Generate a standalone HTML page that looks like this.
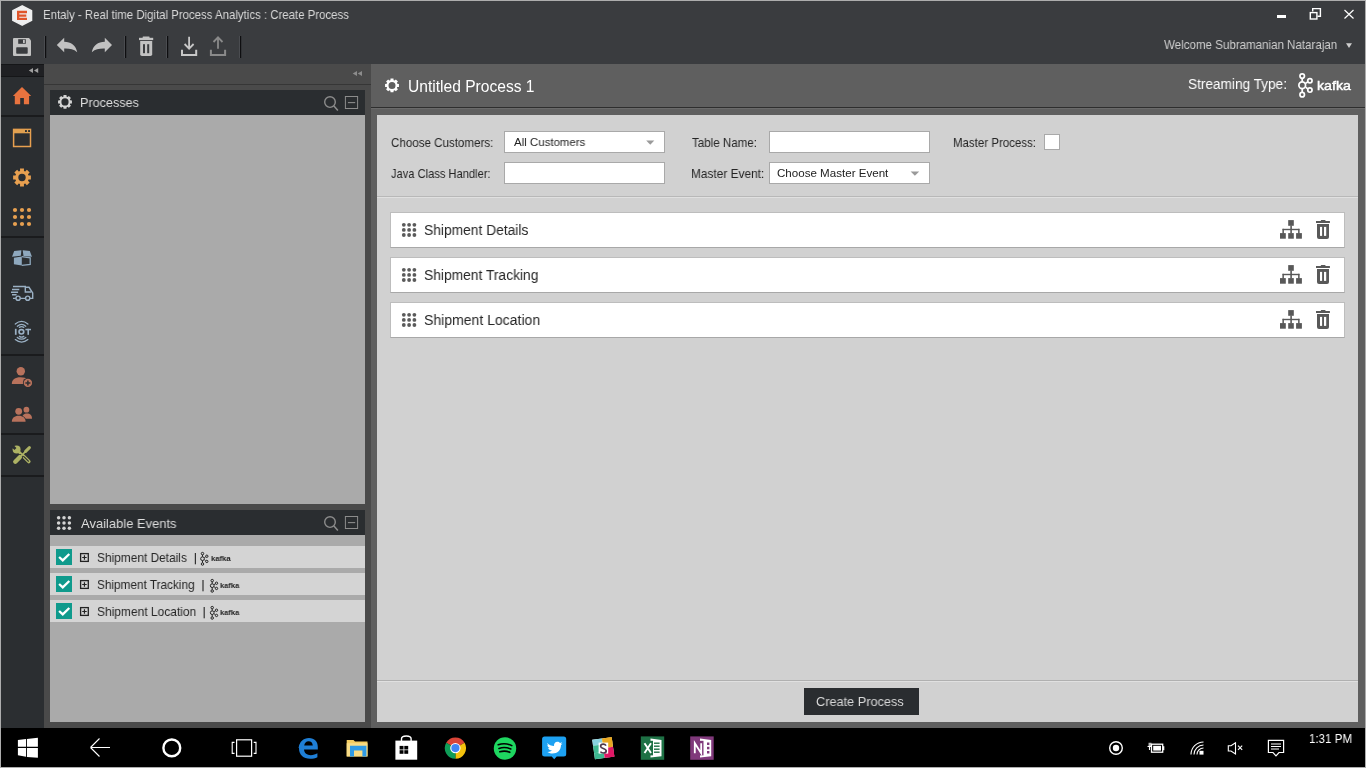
<!DOCTYPE html>
<html><head><meta charset="utf-8">
<style>
*{box-sizing:border-box;margin:0;padding:0}
html,body{width:1366px;height:768px;overflow:hidden;background:#000;font-family:"Liberation Sans",sans-serif}
.a{position:absolute}
.t{position:absolute;white-space:nowrap;line-height:1;transform-origin:0 0;will-change:transform}
svg.full{position:absolute;left:0;top:0;width:1366px;height:768px;overflow:visible}
</style></head><body>
<!-- title bar + toolbar -->
<div class="a" style="left:0;top:0;width:1366px;height:64px;background:#3a3c3f"></div>
<!-- sidebar -->
<div class="a" style="left:0;top:64px;width:44px;height:664px;background:#2b2e31"></div>
<div class="a" style="left:0;top:64px;width:44px;height:13px;background:#1f2023;border-top:1px solid #151618;border-bottom:1px solid #151618"></div>
<div class="a" style="left:0;top:115px;width:44px;height:2px;background:#1a1b1d"></div>
<div class="a" style="left:0;top:236px;width:44px;height:2px;background:#1a1b1d"></div>
<div class="a" style="left:0;top:354px;width:44px;height:2px;background:#1a1b1d"></div>
<div class="a" style="left:0;top:433px;width:44px;height:2px;background:#1a1b1d"></div>
<div class="a" style="left:0;top:475px;width:44px;height:2px;background:#1a1b1d"></div>
<!-- left panel -->
<div class="a" style="left:44px;top:64px;width:327px;height:664px;background:#4a4a4a"></div>
<div class="a" style="left:44px;top:64px;width:327px;height:20px;background:#4a4a4a"></div>
<div class="a" style="left:44px;top:84px;width:327px;height:1px;background:#363636"></div>
<div class="a" style="left:50px;top:90px;width:315px;height:25px;background:#2a2d30"></div>
<div class="a" style="left:50px;top:115px;width:315px;height:389px;background:#aaaaaa"></div>
<div class="a" style="left:50px;top:510px;width:315px;height:25px;background:#2a2d30"></div>
<div class="a" style="left:50px;top:535px;width:315px;height:187px;background:#aaaaaa"></div>
<div class="a" style="left:50px;top:546px;width:315px;height:22px;background:#d4d4d4"></div>
<div class="a" style="left:50px;top:573px;width:315px;height:22px;background:#d4d4d4"></div>
<div class="a" style="left:50px;top:600px;width:315px;height:22px;background:#d4d4d4"></div>
<!-- main -->
<div class="a" style="left:371px;top:64px;width:995px;height:664px;background:#5f5f5f"></div>
<div class="a" style="left:371px;top:107px;width:995px;height:1px;background:#2e2e2e"></div>
<div class="a" style="left:371px;top:108px;width:995px;height:1px;background:#6a6a6a"></div>
<div class="a" style="left:377px;top:115px;width:981px;height:607px;background:#d1d1d1"></div>
<div class="a" style="left:377px;top:196px;width:981px;height:1px;background:#b8b8b8"></div>
<div class="a" style="left:377px;top:197px;width:981px;height:1px;background:#e0e0e0"></div>
<div class="a" style="left:377px;top:680px;width:981px;height:1px;background:#b0b0b0"></div>
<div class="a" style="left:377px;top:681px;width:981px;height:1px;background:#e0e0e0"></div>
<!-- form controls -->
<div class="a" style="left:504px;top:131px;width:161px;height:22px;background:#fff;border:1px solid #a9a9a9"></div>
<div class="a" style="left:504px;top:162px;width:161px;height:22px;background:#fff;border:1px solid #a9a9a9"></div>
<div class="a" style="left:769px;top:131px;width:161px;height:22px;background:#fff;border:1px solid #a9a9a9"></div>
<div class="a" style="left:769px;top:162px;width:161px;height:22px;background:#fff;border:1px solid #a9a9a9"></div>
<div class="a" style="left:1044px;top:134px;width:16px;height:16px;background:#fff;border:1px solid #a9a9a9"></div>
<!-- rows -->
<div class="a" style="left:390px;top:212px;width:955px;height:36px;background:#fff;border:1px solid #bdbdbd;border-bottom-color:#a8a8a8"></div>
<div class="a" style="left:390px;top:257px;width:955px;height:36px;background:#fff;border:1px solid #bdbdbd;border-bottom-color:#a8a8a8"></div>
<div class="a" style="left:390px;top:302px;width:955px;height:36px;background:#fff;border:1px solid #bdbdbd;border-bottom-color:#a8a8a8"></div>
<!-- button -->
<div class="a" style="left:804px;top:688px;width:115px;height:27px;background:#2a2d30"></div>
<!-- taskbar -->
<div class="a" style="left:0;top:728px;width:1366px;height:40px;background:#000"></div>
<svg class="full" viewBox="0 0 1366 768">
<path d="M22.2,5.9 L31.5,10.6 L31.5,20.4 L22.2,25.1 L12.899999999999999,20.4 L12.899999999999999,10.6Z" fill="#efefef" stroke="#efefef" stroke-width="1.6" stroke-linejoin="round"/>
<path d="M17,10.8 H27 V13.2 H19.3 V14.5 H26.3 V16.7 H19.3 V17.8 H27 V20.1 H17Z" fill="#e0552a"/>
<rect x="1277" y="15" width="9" height="3" fill="#fff"/>
<path d="M1312.7,11.5 V8.6 H1320.4 V16.2 H1317.5" fill="none" stroke="#fff" stroke-width="1.4"/>
<rect x="1310.3" y="12.6" width="6.6" height="6.4" fill="none" stroke="#fff" stroke-width="1.4"/>
<path d="M1344.5,10 L1353.5,18.5 M1353.5,10 L1344.5,18.5" stroke="#fff" stroke-width="1.2"/>
<path d="M13,39 Q13,38 14,38 H29 L31,40.5 V55 Q31,56 30,56 H14 Q13,56 13,55Z" fill="#c2c2c2"/>
<rect x="18.2" y="39.2" width="7.6" height="4.6" fill="#3a3c3f"/>
<rect x="23" y="39.8" width="1.8" height="3.3" fill="#c2c2c2"/>
<rect x="16.2" y="47.2" width="11.5" height="6.5" rx="0.8" fill="#3a3c3f"/>
<rect x="44.0" y="36" width="1" height="22" fill="#4a4c50"/>
<rect x="45.0" y="36" width="1.2" height="22" fill="#0e0e10"/>
<rect x="124.0" y="36" width="1" height="22" fill="#4a4c50"/>
<rect x="125.0" y="36" width="1.2" height="22" fill="#0e0e10"/>
<rect x="166.0" y="36" width="1" height="22" fill="#4a4c50"/>
<rect x="167.0" y="36" width="1.2" height="22" fill="#0e0e10"/>
<rect x="239.0" y="36" width="1" height="22" fill="#4a4c50"/>
<rect x="240.0" y="36" width="1.2" height="22" fill="#0e0e10"/>
<path d="M56.8,45 L64.2,37.7 V41.7 C71,41.7 76,45.5 77.2,52.2 C73.5,48.8 69.5,48.4 64.2,48.5 V52.2Z" fill="#c2c2c2"/>
<path d="M112,45 L104.8,37.7 V41.7 C98,41.7 93,45.5 91.8,52.2 C95.5,48.8 99.5,48.4 104.8,48.5 V52.2Z" fill="#c2c2c2"/>
<rect x="139" y="37.8" width="14.2" height="2.3" fill="#c2c2c2"/>
<rect x="142.6" y="36.6" width="7" height="1.6" rx="0.6" fill="#c2c2c2"/>
<path d="M140.2,41 H152.2 V54.2 Q152.2,56 150.4,56 H142 Q140.2,56 140.2,54.2Z" fill="#c2c2c2"/>
<rect x="143" y="44.2" width="2" height="9" fill="#3a3c3f"/><rect x="147.2" y="44.2" width="2" height="9" fill="#3a3c3f"/>
<path d="M182,49.8 V55 H196.2 V49.8" fill="none" stroke="#c8c8c8" stroke-width="2"/>
<path d="M189.1,36.8 V48 M184.6,44 L189.1,48.6 L193.6,44" fill="none" stroke="#c8c8c8" stroke-width="1.8"/>
<path d="M210.9,49.8 V55 H225.1 V49.8" fill="none" stroke="#8a8a8a" stroke-width="2"/>
<path d="M218,48.7 V37.5 M213.5,42 L218,37.4 L222.5,42" fill="none" stroke="#8a8a8a" stroke-width="1.8"/>
<path d="M1346,43.3 H1352 L1349,48Z" fill="#cfcfcf"/>
<path d="M28.8,70.5 L33,67.9 V73.1Z M34,70.5 L38.2,67.9 V73.1Z" fill="#a0a0a0"/>
<path d="M352.7,73.5 L357,71.1 V76Z M357.7,73.5 L362,71.1 V76Z" fill="#8c8c8c"/>
<path d="M22,87.1 L31.2,96 H29.1 V104.2 H23.9 V98.1 H20.2 V104.2 H14.8 V96 H12.9Z" fill="#e8733f"/>
<rect x="13.6" y="129.4" width="16.9" height="17.1" fill="none" stroke="#e8a050" stroke-width="1.5"/>
<rect x="13.6" y="129.4" width="16.9" height="3.9" fill="#e0a050"/>
<rect x="25" y="130.1" width="1.9" height="1.9" fill="#2b2e31"/><rect x="28.1" y="130.1" width="1.9" height="1.9" fill="#2b2e31"/>
<path d="M20.07,170.98 L20.03,168.62 L23.97,168.62 L23.93,170.98 L25.24,171.52 L26.89,169.83 L29.67,172.61 L27.98,174.26 L28.52,175.57 L30.88,175.53 L30.88,179.47 L28.52,179.43 L27.98,180.74 L29.67,182.39 L26.89,185.17 L25.24,183.48 L23.93,184.02 L23.97,186.38 L20.03,186.38 L20.07,184.02 L18.76,183.48 L17.11,185.17 L14.33,182.39 L16.02,180.74 L15.48,179.43 L13.12,179.47 L13.12,175.53 L15.48,175.57 L16.02,174.26 L14.33,172.61 L17.11,169.83 L18.76,171.52ZM25.70,177.50 A3.7,3.7 0 1,0 18.30,177.50 A3.7,3.7 0 1,0 25.70,177.50Z" fill="#e8a050" fill-rule="evenodd"/>
<circle cx="15" cy="210" r="2.1" fill="#e8a050"/>
<circle cx="15" cy="217" r="2.1" fill="#e8a050"/>
<circle cx="15" cy="224" r="2.1" fill="#e8a050"/>
<circle cx="22" cy="210" r="2.1" fill="#e8a050"/>
<circle cx="22" cy="217" r="2.1" fill="#e8a050"/>
<circle cx="22" cy="224" r="2.1" fill="#e8a050"/>
<circle cx="29" cy="210" r="2.1" fill="#e8a050"/>
<circle cx="29" cy="217" r="2.1" fill="#e8a050"/>
<circle cx="29" cy="224" r="2.1" fill="#e8a050"/>
<path d="M12,256.8 L14.2,251 L21.4,250.3 L20.8,255.8Z" fill="#8ea8be"/>
<path d="M22.7,250.2 L29.8,251 L32,256.8 L23.5,256Z" fill="#8ea8be"/>
<path d="M13.9,257.8 L21.8,256.6 V265.4 L13.9,264.2Z" fill="#8ea8be"/>
<path d="M21.8,256.6 L30.2,257.8 V264.4 L21.8,265.4" fill="none" stroke="#8ea8be" stroke-width="1.3"/>
<g fill="none" stroke="#9ab0c4" stroke-width="1.4"><path d="M13,286.5 H25.3 V292 H31"/><path d="M25.3,287.3 H29 L32.7,293 V298.4 H29.9 M25.5,298.4 H20.3 M15.9,298.4 H13"/><path d="M12,289.5 H19.3 M11,292.2 H18.1 M12,294.8 H16.6"/><circle cx="18.1" cy="298.2" r="2.1"/><circle cx="27.7" cy="298.2" r="2.1"/></g>
<g fill="none" stroke="#9ab0c4" stroke-width="1.3" stroke-linecap="round"><path d="M15.3,324 Q21.6,318.8 27.9,324"/><path d="M17.3,326.2 Q21.6,322.6 25.8,326.2"/><path d="M19.4,327.4 Q21.6,325.8 23.8,327.4"/><path d="M15.3,339.6 Q21.6,344.8 27.9,339.6"/><path d="M17.3,337.4 Q21.6,341 25.8,337.4"/><path d="M19.4,336.4 Q21.6,338 23.8,336.4"/></g>
<g fill="#9ab0c4"><rect x="14.9" y="328.8" width="1.7" height="6"/><rect x="25.4" y="328.8" width="5.6" height="1.5"/><rect x="27.4" y="328.8" width="1.6" height="6"/></g>
<ellipse cx="21.4" cy="331.8" rx="2.35" ry="2.2" fill="none" stroke="#9ab0c4" stroke-width="1.7"/>
<circle cx="20.8" cy="371.3" r="4.2" fill="#b8725c"/>
<path d="M11.8,384 C11.8,379.5 15,377.2 20.5,377.2 C24,377.2 26,378 27,379 V384Z" fill="#b8725c"/>
<circle cx="27.9" cy="382.9" r="5" fill="#2b2e31"/><circle cx="27.9" cy="382.9" r="4.2" fill="#b8725c"/>
<path d="M25.4,382.9 H30.4 M27.9,380.4 V385.4" stroke="#2b2e31" stroke-width="1.5"/>
<circle cx="26.4" cy="409.7" r="2.9" fill="#b8725c"/>
<path d="M22,418.8 C22,415 24,413.5 27,413.5 C30,413.5 32,415 32,418.8Z" fill="#b8725c"/>
<circle cx="18.7" cy="411.3" r="4" fill="#2b2e31"/><circle cx="18.7" cy="411.3" r="3.4" fill="#b8725c"/>
<path d="M11,422 C11,417.5 14,415.2 18.7,415.2 C23.4,415.2 26.4,417.5 26.4,422Z" fill="#2b2e31"/>
<path d="M11.8,421.8 C11.8,418 14.5,415.8 18.7,415.8 C22.9,415.8 25.6,418 25.6,421.8Z" fill="#b8725c"/>
<g stroke-linecap="round"><line x1="23.2" y1="456" x2="28.8" y2="461.6" stroke="#adb264" stroke-width="3.6"/><line x1="23.6" y1="456.4" x2="28.4" y2="461.2" stroke="#2b2e31" stroke-width="1.2"/><circle cx="16.6" cy="449.6" r="4" fill="#adb264"/><line x1="17" y1="450" x2="22.4" y2="455.2" stroke="#adb264" stroke-width="2.6"/><rect x="11.5" y="446" width="4.6" height="2.8" fill="#2b2e31" transform="rotate(45 13.8 447.4)"/><line x1="15.5" y1="461.5" x2="19.8" y2="457.2" stroke="#2b2e31" stroke-width="6"/><line x1="15.3" y1="461.7" x2="19.8" y2="457.2" stroke="#adb264" stroke-width="4.4"/><line x1="19.8" y1="457.2" x2="26.4" y2="450.6" stroke="#adb264" stroke-width="1.6"/><line x1="25.6" y1="451.4" x2="29.4" y2="447.6" stroke="#adb264" stroke-width="3"/></g>
<path d="M390.39,80.14 L390.52,78.46 L393.48,78.46 L393.61,80.14 L394.58,80.54 L395.87,79.45 L397.95,81.53 L396.86,82.82 L397.26,83.79 L398.94,83.92 L398.94,86.88 L397.26,87.01 L396.86,87.98 L397.95,89.27 L395.87,91.35 L394.58,90.26 L393.61,90.66 L393.48,92.34 L390.52,92.34 L390.39,90.66 L389.42,90.26 L388.13,91.35 L386.05,89.27 L387.14,87.98 L386.74,87.01 L385.06,86.88 L385.06,83.92 L386.74,83.79 L387.14,82.82 L386.05,81.53 L388.13,79.45 L389.42,80.54ZM395.50,85.40 A3.5,3.5 0 1,0 388.50,85.40 A3.5,3.5 0 1,0 395.50,85.40Z" fill="#ffffff" fill-rule="evenodd"/>
<path d="M63.39,96.64 L63.52,94.96 L66.48,94.96 L66.61,96.64 L67.58,97.04 L68.87,95.95 L70.95,98.03 L69.86,99.32 L70.26,100.29 L71.94,100.42 L71.94,103.38 L70.26,103.51 L69.86,104.48 L70.95,105.77 L68.87,107.85 L67.58,106.76 L66.61,107.16 L66.48,108.84 L63.52,108.84 L63.39,107.16 L62.42,106.76 L61.13,107.85 L59.05,105.77 L60.14,104.48 L59.74,103.51 L58.06,103.38 L58.06,100.42 L59.74,100.29 L60.14,99.32 L59.05,98.03 L61.13,95.95 L62.42,97.04ZM68.60,101.90 A3.6,3.6 0 1,0 61.40,101.90 A3.6,3.6 0 1,0 68.60,101.90Z" fill="#d4d4d4" fill-rule="evenodd"/>
<g fill="none" stroke="#ffffff" stroke-width="1.7"><path d="M1302.2,78.30000000000001 V81.7 M1302.2,88.7 V92.5 M1305.6000000000001,83.3 L1307.7,82.0 M1305.6000000000001,87.10000000000001 L1307.7,88.8"/><circle cx="1302.20" cy="76.10" r="2.25"/><circle cx="1302.20" cy="85.20" r="3.35"/><circle cx="1302.20" cy="94.70" r="2.25"/><circle cx="1309.90" cy="80.80" r="2.15"/><circle cx="1309.90" cy="90.10" r="2.15"/></g>
<circle cx="330" cy="102.1" r="5.3" fill="none" stroke="#8c8c8c" stroke-width="1.4"/>
<line x1="333.9" y1="106" x2="337.9" y2="110.6" stroke="#8c8c8c" stroke-width="1.5"/>
<rect x="345.4" y="96.5" width="12.2" height="12" fill="none" stroke="#8c8c8c" stroke-width="1"/>
<line x1="347.9" y1="102.6" x2="355.2" y2="102.6" stroke="#8c8c8c" stroke-width="1.1"/>
<circle cx="330" cy="522.1" r="5.3" fill="none" stroke="#8c8c8c" stroke-width="1.4"/>
<line x1="333.9" y1="526" x2="337.9" y2="530.6" stroke="#8c8c8c" stroke-width="1.5"/>
<rect x="345.4" y="516.5" width="12.2" height="12" fill="none" stroke="#8c8c8c" stroke-width="1"/>
<line x1="347.9" y1="522.6" x2="355.2" y2="522.6" stroke="#8c8c8c" stroke-width="1.1"/>
<circle cx="58.6" cy="517.8" r="1.75" fill="#d4d4d4"/>
<circle cx="58.6" cy="523" r="1.75" fill="#d4d4d4"/>
<circle cx="58.6" cy="528.2" r="1.75" fill="#d4d4d4"/>
<circle cx="64" cy="517.8" r="1.75" fill="#d4d4d4"/>
<circle cx="64" cy="523" r="1.75" fill="#d4d4d4"/>
<circle cx="64" cy="528.2" r="1.75" fill="#d4d4d4"/>
<circle cx="69.4" cy="517.8" r="1.75" fill="#d4d4d4"/>
<circle cx="69.4" cy="523" r="1.75" fill="#d4d4d4"/>
<circle cx="69.4" cy="528.2" r="1.75" fill="#d4d4d4"/>
<circle cx="403.8" cy="224.8" r="1.9" fill="#5a5a5a"/>
<circle cx="403.8" cy="229.9" r="1.9" fill="#5a5a5a"/>
<circle cx="403.8" cy="235.0" r="1.9" fill="#5a5a5a"/>
<circle cx="409.1" cy="224.8" r="1.9" fill="#5a5a5a"/>
<circle cx="409.1" cy="229.9" r="1.9" fill="#5a5a5a"/>
<circle cx="409.1" cy="235.0" r="1.9" fill="#5a5a5a"/>
<circle cx="414.4" cy="224.8" r="1.9" fill="#5a5a5a"/>
<circle cx="414.4" cy="229.9" r="1.9" fill="#5a5a5a"/>
<circle cx="414.4" cy="235.0" r="1.9" fill="#5a5a5a"/>
<g fill="#585858"><rect x="1288.2" y="220.1" width="5.6" height="5.7"/><rect x="1290.3" y="225.5" width="1.6" height="8"/><rect x="1282.6" y="228.8" width="16.8" height="1.4"/><rect x="1282.4" y="228.8" width="1.5" height="5"/><rect x="1298.1" y="228.8" width="1.5" height="5"/><rect x="1280" y="233.1" width="5.8" height="5.6"/><rect x="1288.2" y="233.1" width="5.6" height="5.6"/><rect x="1296.1" y="233.1" width="5.8" height="5.6"/><rect x="1316" y="221" width="13.9" height="2"/><rect x="1320.8" y="220" width="4.7" height="1.5" rx="0.5"/><path d="M1317,224 H1329 V236.9 Q1329,238.9 1327,238.9 H1319 Q1317,238.9 1317,236.9Z"/></g>
<rect x="1320" y="226.9" width="2.1" height="9" fill="#fff"/><rect x="1324" y="226.9" width="2.2" height="9" fill="#fff"/>
<circle cx="403.8" cy="269.8" r="1.9" fill="#5a5a5a"/>
<circle cx="403.8" cy="274.9" r="1.9" fill="#5a5a5a"/>
<circle cx="403.8" cy="280.0" r="1.9" fill="#5a5a5a"/>
<circle cx="409.1" cy="269.8" r="1.9" fill="#5a5a5a"/>
<circle cx="409.1" cy="274.9" r="1.9" fill="#5a5a5a"/>
<circle cx="409.1" cy="280.0" r="1.9" fill="#5a5a5a"/>
<circle cx="414.4" cy="269.8" r="1.9" fill="#5a5a5a"/>
<circle cx="414.4" cy="274.9" r="1.9" fill="#5a5a5a"/>
<circle cx="414.4" cy="280.0" r="1.9" fill="#5a5a5a"/>
<g fill="#585858"><rect x="1288.2" y="265.1" width="5.6" height="5.7"/><rect x="1290.3" y="270.5" width="1.6" height="8"/><rect x="1282.6" y="273.8" width="16.8" height="1.4"/><rect x="1282.4" y="273.8" width="1.5" height="5"/><rect x="1298.1" y="273.8" width="1.5" height="5"/><rect x="1280" y="278.1" width="5.8" height="5.6"/><rect x="1288.2" y="278.1" width="5.6" height="5.6"/><rect x="1296.1" y="278.1" width="5.8" height="5.6"/><rect x="1316" y="266" width="13.9" height="2"/><rect x="1320.8" y="265" width="4.7" height="1.5" rx="0.5"/><path d="M1317,269 H1329 V281.9 Q1329,283.9 1327,283.9 H1319 Q1317,283.9 1317,281.9Z"/></g>
<rect x="1320" y="271.9" width="2.1" height="9" fill="#fff"/><rect x="1324" y="271.9" width="2.2" height="9" fill="#fff"/>
<circle cx="403.8" cy="314.8" r="1.9" fill="#5a5a5a"/>
<circle cx="403.8" cy="319.9" r="1.9" fill="#5a5a5a"/>
<circle cx="403.8" cy="325.0" r="1.9" fill="#5a5a5a"/>
<circle cx="409.1" cy="314.8" r="1.9" fill="#5a5a5a"/>
<circle cx="409.1" cy="319.9" r="1.9" fill="#5a5a5a"/>
<circle cx="409.1" cy="325.0" r="1.9" fill="#5a5a5a"/>
<circle cx="414.4" cy="314.8" r="1.9" fill="#5a5a5a"/>
<circle cx="414.4" cy="319.9" r="1.9" fill="#5a5a5a"/>
<circle cx="414.4" cy="325.0" r="1.9" fill="#5a5a5a"/>
<g fill="#585858"><rect x="1288.2" y="310.1" width="5.6" height="5.7"/><rect x="1290.3" y="315.5" width="1.6" height="8"/><rect x="1282.6" y="318.8" width="16.8" height="1.4"/><rect x="1282.4" y="318.8" width="1.5" height="5"/><rect x="1298.1" y="318.8" width="1.5" height="5"/><rect x="1280" y="323.1" width="5.8" height="5.6"/><rect x="1288.2" y="323.1" width="5.6" height="5.6"/><rect x="1296.1" y="323.1" width="5.8" height="5.6"/><rect x="1316" y="311" width="13.9" height="2"/><rect x="1320.8" y="310" width="4.7" height="1.5" rx="0.5"/><path d="M1317,314 H1329 V326.9 Q1329,328.9 1327,328.9 H1319 Q1317,328.9 1317,326.9Z"/></g>
<rect x="1320" y="316.9" width="2.1" height="9" fill="#fff"/><rect x="1324" y="316.9" width="2.2" height="9" fill="#fff"/>
<path d="M646.2,140.4 H654.3 L650.25,144.8Z" fill="#9a9a9a"/>
<path d="M910.6,171.4 H919.2 L914.9,175.8Z" fill="#9a9a9a"/>
<rect x="56" y="549" width="16" height="16" fill="#0f9a8c"/>
<path d="M59.1,557 L62.75,560.4 L69.3,554" fill="none" stroke="#fff" stroke-width="2.3"/>
<rect x="80.6" y="553.6" width="7.7" height="7.8" fill="none" stroke="#222" stroke-width="1.3"/>
<path d="M82.2,557.5 H86.7 M84.45,555.3 V559.8" stroke="#222" stroke-width="1.2"/>
<rect x="56" y="576" width="16" height="16" fill="#0f9a8c"/>
<path d="M59.1,584 L62.75,587.4 L69.3,581" fill="none" stroke="#fff" stroke-width="2.3"/>
<rect x="80.6" y="580.6" width="7.7" height="7.8" fill="none" stroke="#222" stroke-width="1.3"/>
<path d="M82.2,584.5 H86.7 M84.45,582.3 V586.8" stroke="#222" stroke-width="1.2"/>
<rect x="56" y="603" width="16" height="16" fill="#0f9a8c"/>
<path d="M59.1,611 L62.75,614.4 L69.3,608" fill="none" stroke="#fff" stroke-width="2.3"/>
<rect x="80.6" y="607.6" width="7.7" height="7.8" fill="none" stroke="#222" stroke-width="1.3"/>
<path d="M82.2,611.5 H86.7 M84.45,609.3 V613.8" stroke="#222" stroke-width="1.2"/>
<rect x="194.8" y="553" width="1.2" height="11.3" fill="#333"/>
<g fill="none" stroke="#222222" stroke-width="1.0"><path d="M202.5,554.836 V556.74 M202.5,560.6600000000001 V562.7880000000001 M204.404,557.6360000000001 L205.58,556.908 M204.404,559.764 L205.58,560.716"/><circle cx="202.50" cy="553.60" r="1.24"/><circle cx="202.50" cy="558.70" r="1.85"/><circle cx="202.50" cy="564.02" r="1.24"/><circle cx="206.81" cy="556.24" r="1.18"/><circle cx="206.81" cy="561.44" r="1.18"/></g>
<rect x="202.4" y="580" width="1.2" height="11.3" fill="#333"/>
<g fill="none" stroke="#222222" stroke-width="1.0"><path d="M212.2,581.836 V583.74 M212.2,587.6600000000001 V589.7880000000001 M214.10399999999998,584.6360000000001 L215.28,583.908 M214.10399999999998,586.764 L215.28,587.716"/><circle cx="212.20" cy="580.60" r="1.24"/><circle cx="212.20" cy="585.70" r="1.85"/><circle cx="212.20" cy="591.02" r="1.24"/><circle cx="216.51" cy="583.24" r="1.18"/><circle cx="216.51" cy="588.44" r="1.18"/></g>
<rect x="203.6" y="607" width="1.2" height="11.3" fill="#333"/>
<g fill="none" stroke="#222222" stroke-width="1.0"><path d="M212.2,608.836 V610.74 M212.2,614.6600000000001 V616.7880000000001 M214.10399999999998,611.6360000000001 L215.28,610.908 M214.10399999999998,613.764 L215.28,614.716"/><circle cx="212.20" cy="607.60" r="1.24"/><circle cx="212.20" cy="612.70" r="1.85"/><circle cx="212.20" cy="618.02" r="1.24"/><circle cx="216.51" cy="610.24" r="1.18"/><circle cx="216.51" cy="615.44" r="1.18"/></g>
<g fill="#fff"><path d="M17.9,740.1 L26,739.1 V746.8 H17.9Z"/><path d="M26.9,738.9 L37.9,737.8 V746.8 H26.9Z"/><path d="M17.9,748 H26 V756.8 L17.9,755.3Z"/><path d="M26.9,748 H37.9 V757.8 L26.9,757Z"/></g>
<path d="M90.5,747.5 H110 M90.5,747.5 L99.5,738.5 M90.5,747.5 L99.5,756.5" stroke="#fff" stroke-width="1.1" fill="none"/>
<circle cx="171.8" cy="747.9" r="8.4" fill="none" stroke="#fff" stroke-width="2.4"/>
<rect x="236.6" y="739.8" width="15" height="16.4" fill="none" stroke="#fff" stroke-width="1.2"/>
<path d="M234.5,742.4 H232.2 V753.4 H234.5 M253.7,742.4 H256 V753.4 H253.7" fill="none" stroke="#fff" stroke-width="1.1"/>
<path d="M299,748.5 C299,741.5 303.5,738 309,738 C314.5,738 317.8,741.6 317.8,747 V749.6 H304 C304.3,753.3 307,755.2 310.8,755.2 C313.3,755.2 315.6,754.4 317.4,753.3 V757.2 C315.4,758.3 312.8,758.7 310,758.7 C303.5,758.7 299,755 299,748.5Z M304.2,745.6 H312.8 C312.6,742.6 311,741.2 308.6,741.2 C306.2,741.2 304.6,742.8 304.2,745.6Z" fill="#1f7fd6" fill-rule="evenodd"/>
<path d="M298.5,748 C299.5,742 304,739.8 308,740.2 C304.5,741.2 302,744 301.5,747Z" fill="#1f7fd6"/>
<path d="M346.7,740 H353.5 L355,741.6 H367.5 V756.4 H346.7Z" fill="#f3cd62"/>
<rect x="346.7" y="743.2" width="20.8" height="13.2" fill="#f8dc86"/>
<path d="M350,745.8 H366.4 V756.4 H362.4 V750.4 H354 V756.4 H350Z" fill="#2f9be6"/>
<path d="M395.4,740.6 H417.2 V759.7 H395.4Z" fill="#fff"/>
<path d="M401.5,741 V738.8 C401.5,736.6 403.5,736 406.3,736 C409.1,736 411.1,736.6 411.1,738.8 V741" fill="none" stroke="#fff" stroke-width="1.4"/>
<g fill="#000"><rect x="399.6" y="745.9" width="3.9" height="3.6"/><rect x="404.3" y="745.9" width="3.9" height="3.6"/><rect x="399.6" y="750.2" width="3.9" height="3.6"/><rect x="404.3" y="750.2" width="3.9" height="3.6"/></g>
<path d="M455.4,748.1 L446.22,742.80 A10.6,10.6 0 0,1 464.58,742.80Z" fill="#db4437"/><path d="M455.4,748.1 L464.58,742.80 A10.6,10.6 0 0,1 455.40,758.70Z" fill="#f4c20d"/><path d="M455.4,748.1 L455.40,758.70 A10.6,10.6 0 0,1 446.22,742.80Z" fill="#0f9d58"/>
<circle cx="455.4" cy="748.1" r="5.2" fill="#fff"/><circle cx="455.4" cy="748.1" r="4.1" fill="#4285f4"/>
<circle cx="505" cy="748.5" r="11.2" fill="#1ed760"/>
<path d="M498.2,744.8 Q505,742.4 511.8,745.6 M499,748.4 Q505,746.4 510.8,749 M499.8,751.8 Q505,750.2 509.8,752.3" fill="none" stroke="#000" stroke-width="1.6" stroke-linecap="round"/>
<path d="M544.6,736.4 H563.7 Q566.2,736.4 566.2,738.9 V754.1 Q566.2,756.6 563.7,756.6 H556.7 L554.2,759.2 L551.7,756.6 H544.6 Q542.1,756.6 542.1,754.1 V738.9 Q542.1,736.4 544.6,736.4Z" fill="#1da1f2"/>
<path d="M547,743 C549,745 551.5,746 554,746 C553.8,743.6 555.2,741.8 557.4,741.8 C558.6,741.8 559.4,742.3 560,743 L562.2,742.3 L560.9,744 L562.5,743.7 L561,745 C561,750 557.5,753.5 552.5,753.5 C550.3,753.5 548.7,752.9 547.3,752 C549.2,752.2 550.8,751.5 552,750.6 C549.8,750.3 548.6,749.4 548.2,748 L549.7,748 C548.2,747.4 547.4,746.3 547.4,744.8 L548.8,745.2 C547.6,744.4 547.1,743.8 547,743Z" fill="#fff"/>
<g transform="rotate(-8 603.3 748.2)"><rect x="593.5" y="738.4" width="19.6" height="19.6" fill="#fff"/><rect x="593.5" y="738.4" width="9.8" height="6" fill="#89d3df"/><rect x="603.3" y="738.4" width="9.8" height="6" fill="#e9a820"/><rect x="607.1" y="738.4" width="6" height="9.8" fill="#e9a820"/><rect x="607.1" y="748.2" width="6" height="9.8" fill="#e01765"/><rect x="593.5" y="752" width="9.8" height="6" fill="#3eb991"/><rect x="603.3" y="752" width="9.8" height="6" fill="#e01765"/><rect x="593.5" y="744.4" width="6" height="7.6" fill="#3eb991"/></g>
<rect x="598.6" y="742.6" width="9.6" height="11" fill="#fff"/>
<path d="M606,745.6 C605.4,744.6 604.4,744.2 603.3,744.2 C601.6,744.2 600.6,745.1 600.6,746.3 C600.6,749 606.2,748 606.2,751 C606.2,752.3 605,753 603.3,753 C602,753 601,752.5 600.4,751.6" fill="none" stroke="#4d394b" stroke-width="1.7"/>
<rect x="640.8" y="736.4" width="23.4" height="23.4" fill="#1e7145"/>
<path d="M650.5,738.6 L661.5,740 V756.2 L650.5,757.6Z" fill="#fff"/>
<g fill="#1e7145"><rect x="654" y="742.5" width="5.6" height="1.4"/><rect x="654" y="745.5" width="5.6" height="1.4"/><rect x="654" y="748.5" width="5.6" height="1.4"/><rect x="654" y="751.5" width="5.6" height="1.4"/></g>
<rect x="643" y="740.8" width="10" height="14.6" fill="#1e7145"/>
<path d="M644.5,743.2 L651,753 M651,743.2 L644.5,753" stroke="#fff" stroke-width="1.9"/>
<rect x="690.2" y="736.4" width="23.5" height="23.4" fill="#80397b"/>
<path d="M700,738.6 L711.2,740 V756.2 L700,757.6Z" fill="#fff"/>
<g fill="#80397b"><rect x="707" y="742.5" width="2.4" height="2.5"/><rect x="707" y="746.8" width="2.4" height="2.5"/><rect x="707" y="751" width="2.4" height="2.5"/></g>
<rect x="692.5" y="740.8" width="11" height="14.6" fill="#80397b"/>
<path d="M694.8,753.2 V743.2 L701.2,753.2 V743.2" fill="none" stroke="#fff" stroke-width="1.8"/>
<circle cx="1116" cy="748" r="6.3" fill="none" stroke="#fff" stroke-width="1.4"/><circle cx="1116" cy="748" r="3.2" fill="#fff"/>
<rect x="1151.5" y="744.2" width="11.2" height="8" fill="none" stroke="#fff" stroke-width="1.3"/><rect x="1162.8" y="746.2" width="1.5" height="4" fill="#fff"/>
<rect x="1153.2" y="745.8" width="7.8" height="4.8" fill="#fff"/>
<path d="M1147.5,746.5 H1151.5 M1149.2,742.8 V746.5 M1150.8,742.8 V746.5 M1149.5,746.5 V750" stroke="#fff" stroke-width="1.1" fill="none"/>
<path d="M1191,754.5 A12.5,12.5 0 0,1 1203.5,742 M1194,754.5 A9.5,9.5 0 0,1 1203.5,745 M1197,754.5 A6.5,6.5 0 0,1 1203.5,748" fill="none" stroke="#fff" stroke-width="1.1"/>
<rect x="1199.5" y="750.8" width="4" height="3.8" fill="#fff"/>
<path d="M1228.3,745.8 H1231 L1235.5,742.8 V754 L1231,751 H1228.3Z" fill="none" stroke="#fff" stroke-width="1.1"/>
<path d="M1238,745.6 L1242.2,749.8 M1242.2,745.6 L1238,749.8" stroke="#fff" stroke-width="1.1"/>
<path d="M1268.4,740.3 H1283.6 V752.5 H1279 L1276,755.8 L1273,752.5 H1268.4Z" fill="none" stroke="#fff" stroke-width="1.2"/>
<path d="M1271,744 H1281 M1271,746.5 H1281 M1271,749 H1279" stroke="#fff" stroke-width="1"/>
</svg>
<div class="t" style="left:42.80px;top:8px;font-size:13.04px;color:#d8d8d8;font-weight:400;transform:scaleX(0.8764);">Entaly - Real time Digital Process Analytics : Create Process</div>
<div class="t" style="left:1164.20px;top:38px;font-size:13.04px;color:#cfcfcf;font-weight:400;transform:scaleX(0.8869);">Welcome Subramanian Natarajan</div>
<div class="t" style="left:1188.20px;top:77px;font-size:14.49px;color:#ffffff;font-weight:400;transform:scaleX(0.9409);">Streaming Type:</div>
<div class="t" style="left:408.40px;top:79px;font-size:15.60px;color:#ffffff;font-weight:400;transform:scaleX(0.9971);">Untitled Process 1</div>
<div class="t" style="left:80.40px;top:96px;font-size:13.04px;color:#dedede;font-weight:400;transform:scaleX(0.9696);">Processes</div>
<div class="t" style="left:81.00px;top:517px;font-size:13.04px;color:#dedede;font-weight:400;transform:scaleX(0.9938);">Available Events</div>
<div class="t" style="left:391.40px;top:136px;font-size:13.04px;color:#262626;font-weight:400;transform:scaleX(0.8885);">Choose Customers:</div>
<div class="t" style="left:391.40px;top:167px;font-size:13.04px;color:#262626;font-weight:400;transform:scaleX(0.8534);">Java Class Handler:</div>
<div class="t" style="left:514.40px;top:137px;font-size:11.59px;color:#222222;font-weight:400;transform:scaleX(0.9895);">All Customers</div>
<div class="t" style="left:692.20px;top:136px;font-size:13.04px;color:#262626;font-weight:400;transform:scaleX(0.8879);">Table Name:</div>
<div class="t" style="left:952.80px;top:136px;font-size:13.04px;color:#262626;font-weight:400;transform:scaleX(0.8812);">Master Process:</div>
<div class="t" style="left:691.20px;top:167px;font-size:13.04px;color:#262626;font-weight:400;transform:scaleX(0.9106);">Master Event:</div>
<div class="t" style="left:776.80px;top:168px;font-size:11.59px;color:#222222;font-weight:400;transform:scaleX(0.9956);">Choose Master Event</div>
<div class="t" style="left:424.00px;top:223px;font-size:14.49px;color:#262626;font-weight:400;transform:scaleX(0.9531);">Shipment Details</div>
<div class="t" style="left:424.00px;top:268px;font-size:14.49px;color:#262626;font-weight:400;transform:scaleX(0.9534);">Shipment Tracking</div>
<div class="t" style="left:424.00px;top:313px;font-size:14.49px;color:#262626;font-weight:400;transform:scaleX(0.9681);">Shipment Location</div>
<div class="t" style="left:97.00px;top:551px;font-size:13.04px;color:#262626;font-weight:400;transform:scaleX(0.9129);">Shipment Details</div>
<div class="t" style="left:97.00px;top:578px;font-size:13.04px;color:#262626;font-weight:400;transform:scaleX(0.9037);">Shipment Tracking</div>
<div class="t" style="left:97.00px;top:605px;font-size:13.04px;color:#262626;font-weight:400;transform:scaleX(0.9184);">Shipment Location</div>
<div class="t" style="left:816.00px;top:695px;font-size:13.04px;color:#d8d8d8;font-weight:400;transform:scaleX(0.9770);">Create Process</div>
<div class="t" style="left:1309.20px;top:732px;font-size:13.04px;color:#ffffff;font-weight:400;transform:scaleX(0.8865);">1:31 PM</div>
<div class="t" style="left:1316.80px;top:79px;font-size:13.40px;color:#ffffff;font-weight:400;transform:scaleX(1.0574);-webkit-text-stroke:0.45px #fff">kafka</div>
<div class="t" style="left:210.80px;top:555px;font-size:8.10px;color:#222222;font-weight:700;transform:scaleX(0.9470);">kafka</div>
<div class="t" style="left:220.40px;top:582px;font-size:8.10px;color:#222222;font-weight:700;transform:scaleX(0.9276);">kafka</div>
<div class="t" style="left:220.40px;top:609px;font-size:8.10px;color:#222222;font-weight:700;transform:scaleX(0.9276);">kafka</div>
<!-- screen border -->
<div class="a" style="left:0;top:0;width:1366px;height:768px;border:1px solid #adadad"></div>
</body></html>
